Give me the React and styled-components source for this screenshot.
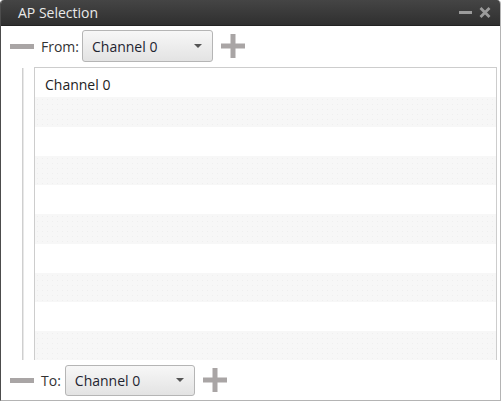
import React from "react";
import styled, { createGlobalStyle } from "styled-components";

const Global = createGlobalStyle`
  html, body { margin: 0; padding: 0; background: #ffffff; }
  body { font-family: "Open Sans", "Noto Sans", sans-serif; }
`;

const Window = styled.div`
  box-sizing: border-box;
  width: 501px;
  height: 401px;
  display: flex;
  flex-direction: column;
  background: #ffffff;
  border-left: 1px solid #4c4c4c;
  border-right: 1px solid #b4b4b4;
  border-bottom: 1px solid #b4b4b4;
  border-radius: 4px 4px 0 0;
  overflow: hidden;
`;

const TitleBar = styled.div`
  height: 26px;
  flex: 0 0 26px;
  display: flex;
  align-items: center;
  padding-left: 17px;
  padding-right: 9px;
  background: linear-gradient(#454545, #2f2f2f);
  border-bottom: 1px solid #222;
  box-sizing: border-box;
`;

const Title = styled.div`
  flex: 1;
  color: #e9e9e9;
  font-size: 14px;
  line-height: 26px;
`;

const WinButtons = styled.div`
  display: flex;
  align-items: center;
  gap: 7px;
`;

const Toolbar = styled.div`
  flex: 0 0 ${(p) => p.$h}px;
  height: ${(p) => p.$h}px;
  display: flex;
  align-items: center;
  padding-left: 9px;
`;

const Bar = styled.div`
  width: 24px;
  height: 5px;
  background: #a9a5a5;
`;

const Label = styled.span`
  margin-left: 7px;
  margin-right: ${(p) => p.$gap}px;
  font-size: 14px;
  color: #333;
`;

const Select = styled.div`
  box-sizing: border-box;
  width: ${(p) => p.$w}px;
  height: ${(p) => p.$h}px;
  display: flex;
  align-items: center;
  justify-content: space-between;
  padding: 0 10px 0 9px;
  border: 1px solid #b5b5b5;
  border-radius: 3px;
  background: linear-gradient(#f7f7f7, #e3e3e3);
  font-size: 14px;
  color: #1e2430;
`;

const Arrow = styled.div`
  width: 0;
  height: 0;
  border-left: 4px solid transparent;
  border-right: 4px solid transparent;
  border-top: 4px solid #555;
`;

const PlusWrap = styled.div`
  margin-left: 8px;
  display: flex;
`;

const Body = styled.div`
  flex: 1;
  display: flex;
  margin-top: 1px;
  min-height: 0;
`;

const TreeLine = styled.div`
  margin-left: 21px;
  width: 1px;
  border-left: 1px solid #cfcfcf;
  background: #e8e8e8;
  margin-top: 1px;
`;

const List = styled.div`
  margin-left: 10px;
  width: 463px;
  box-sizing: border-box;
  border: 1px solid #cdcdcd;
  border-bottom: none;
  overflow: hidden;
`;

const Row = styled.div`
  height: 29.25px;
  box-sizing: border-box;
  padding-left: 10px;
  padding-top: 3px;
  display: flex;
  align-items: center;
  font-size: 14px;
  color: #222;
  background-color: ${(p) => (p.$alt ? "#f7f7f7" : "#ffffff")};
  background-image: ${(p) =>
    p.$alt ? "radial-gradient(#efefef 0.5px, transparent 0.8px)" : "none"};
  background-size: 5px 5px;
`;

function Plus() {
  return (
    <svg width="24" height="24" viewBox="0 0 24 24">
      <rect x="9.5" y="0" width="5" height="24" fill="#a9a5a5" />
      <rect x="0" y="9.5" width="24" height="5" fill="#a9a5a5" />
    </svg>
  );
}

export default function App() {
  const rows = Array.from({ length: 10 }, (_, i) => i);
  return (
    <>
      <Global />
      <Window>
        <TitleBar>
          <Title>AP Selection</Title>
          <WinButtons>
            <svg width="13" height="3" viewBox="0 0 13 3">
              <rect width="13" height="3" fill="#9b9b9b" />
            </svg>
            <svg width="12" height="11" viewBox="0 0 12 11">
              <path d="M1.5 1 L10.5 10 M10.5 1 L1.5 10" stroke="#9b9b9b" strokeWidth="2.8" />
            </svg>
          </WinButtons>
        </TitleBar>
        <Toolbar $h={40}>
          <Bar />
          <Label $gap={3}>From:</Label>
          <Select $w={131} $h={32}>
            <span>Channel 0</span>
            <Arrow />
          </Select>
          <PlusWrap>
            <Plus />
          </PlusWrap>
        </Toolbar>
        <Body>
          <TreeLine />
          <List>
            {rows.map((i) => (
              <Row key={i} $alt={i % 2 === 1}>
                {i === 0 ? "Channel 0" : ""}
              </Row>
            ))}
          </List>
        </Body>
        <Toolbar $h={40}>
          <Bar />
          <Label $gap={4}>To:</Label>
          <Select $w={130} $h={31}>
            <span>Channel 0</span>
            <Arrow />
          </Select>
          <PlusWrap>
            <Plus />
          </PlusWrap>
        </Toolbar>
      </Window>
    </>
  );
}
